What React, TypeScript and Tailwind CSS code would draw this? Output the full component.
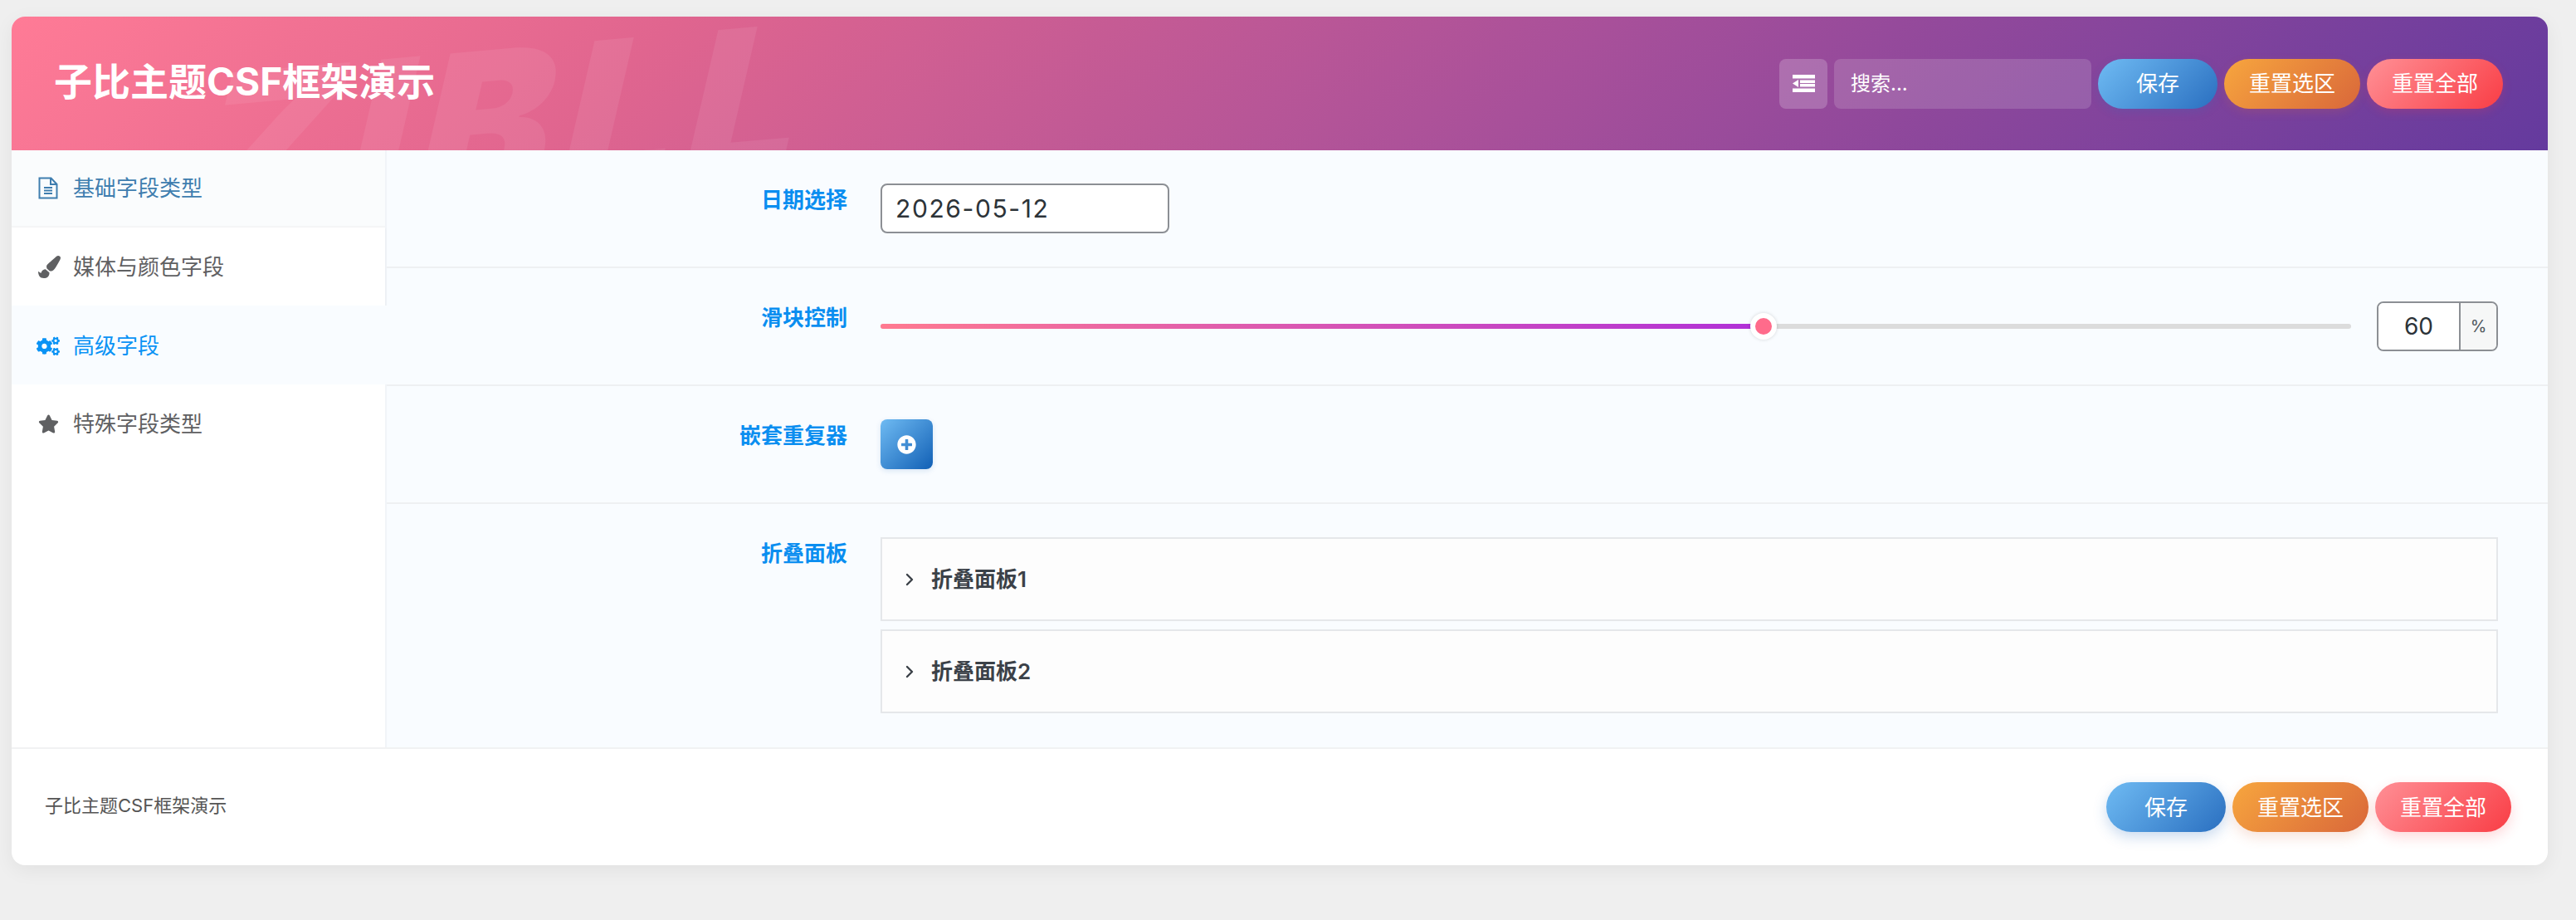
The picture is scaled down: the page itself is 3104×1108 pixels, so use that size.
import { ChevronRight } from "lucide-react";
import { FaCogs, FaPaintBrush, FaPlusCircle, FaStar } from "react-icons/fa";

// outline page with folded corner and three text lines
const PageIcon = () => (
  <svg width="24" height="27" viewBox="0 0 24 27" fill="none" stroke="currentColor" strokeWidth="2">
    <path d="M1.5 1.5h14l7 7.5v16.5h-21z" />
    <path d="M15 1.5V9h7.5" />
    <path d="M7 13h10M7 16.5h10M7 20h10" />
  </svg>
);

const IndentIcon = () => (
  <svg width="27" height="21" viewBox="0 0 27 21" fill="currentColor">
    <rect width="27" height="4.5" />
    <rect x="9" y="6.5" width="18" height="3.5" />
    <rect x="9" y="11" width="18" height="3.5" />
    <rect y="16.5" width="27" height="4.5" />
    <path d="M0 10.5L7 6v9z" />
  </svg>
);

const navItems = [
  { label: "基础字段类型", icon: <PageIcon />, box: "h-[93px] bg-[#fafcfd] text-[#3f7eaf] border-b-2 border-[#f5f6f7] w-[450px]" },
  { label: "媒体与颜色字段", icon: <FaPaintBrush size={27} />, box: "h-[94px] bg-white text-[#5f6062] w-[450px] shadow-[0_1px_3px_rgba(0,0,0,0.05)]" },
  { label: "高级字段", icon: <FaCogs size={28} className="-ml-0.5" />, box: "h-[95px] pt-[2px] text-[#0a93f5] w-[452px] bg-[#f9fcff]" },
  { label: "特殊字段类型", icon: <FaStar size={25} />, box: "h-[95px] bg-white text-[#5f6062] w-[450px]" },
];

const ActionButtons = ({ header }: { header?: boolean }) => (
  <div className="flex gap-2 text-[26px] text-white">
    <button className={`h-[60px] w-[144px] rounded-[30px] bg-[linear-gradient(135deg,#6fbbf3,#2a6fc0)] ${header ? "shadow-[0_4px_12px_rgba(42,111,192,0.2)]" : "shadow-[0_6px_16px_rgba(42,111,192,0.25)]"}`}>
      保存
    </button>
    <button className={`h-[60px] w-[164px] rounded-[30px] bg-[linear-gradient(135deg,#f7a63e,#d9673a)] ${header ? "shadow-[0_4px_12px_rgba(217,103,58,0.2)]" : "shadow-[0_6px_16px_rgba(217,103,58,0.2)]"}`}>
      重置选区
    </button>
    <button className={`h-[60px] w-[164px] rounded-[30px] bg-[linear-gradient(135deg,#ff9096,#f93d45)] ${header ? "shadow-[0_4px_12px_rgba(249,61,69,0.2)]" : "shadow-[0_6px_16px_rgba(249,61,69,0.2)]"}`}>
      重置全部
    </button>
  </div>
);

const Row = ({ label, children, last }: { label: string; children: React.ReactNode; last?: boolean }) => (
  <div className={`flex pt-10 pr-[61px] ${last ? "h-[295px]" : "h-[142px] border-b-2 border-[#eef0f2]"}`}>
    <div className="w-[555px] shrink-0 pt-[2px] text-right text-[26px] font-bold leading-[36px] text-[#0a8ef0]">{label}</div>
    <div className="ml-10 flex-1">{children}</div>
  </div>
);

const Panel = ({ title }: { title: string }) => (
  <div className="flex h-[101px] items-center border-2 border-[#e5e7ea] bg-[#fdfdfd] pl-[21px] text-[26px] font-semibold text-[#3b4148]">
    <ChevronRight size={24} strokeWidth={2.4} className="mr-[14px]" />
    {title}
  </div>
);

export default function App() {
  return (
    <div className="min-h-screen bg-[#efefef] pl-[14px] pr-[34px] pt-5 font-[Inter,'Noto_Sans_CJK_SC',sans-serif]">
      <div className="h-[1022px] overflow-hidden rounded-2xl bg-white shadow-[0_6px_24px_rgba(0,0,0,0.06)]">
        {/* Header */}
        <div className="relative flex h-[161px] items-center justify-between overflow-hidden bg-[linear-gradient(135deg,#ff7b96_0%,#e0658f_25%,#a8509a_60%,#643a9e_100%)] pl-[51px] pr-[54px]">
          <div className="absolute left-[232px] top-[6px] -rotate-[5deg] -skew-x-[18deg] text-[240px] font-black leading-none tracking-[14px] text-white/[0.07]">
            ZIBLL
          </div>
          <h1 className="relative -mt-1 text-[46px] font-bold text-white">子比主题CSF框架演示</h1>
          <div className="relative flex items-center gap-2">
            <button className="flex h-[60px] w-[58px] items-center justify-center rounded-lg bg-white/20 text-white">
              <IndentIcon />
            </button>
            <input
              placeholder="搜索..."
              className="h-[60px] w-[310px] rounded-lg bg-white/15 pl-[20px] text-[24px] text-white outline-none placeholder:text-white"
            />
            <ActionButtons header />
          </div>
        </div>

        {/* Body */}
        <div className="flex h-[721px] border-b-2 border-[#f1f2f3]">
          <div className="relative z-10 w-[450px] shrink-0 bg-white">
            {navItems.map((item) => (
              <div key={item.label} className={`flex items-center pl-[32px] text-[26px] ${item.box}`}>
                <span className="flex w-[42px] shrink-0 items-center">{item.icon}</span>
                {item.label}
              </div>
            ))}
          </div>
          <div className="flex-1 border-l-2 border-[#f1f4f8] bg-[#f9fcff]">
            <Row label="日期选择">
              <input
                defaultValue="2026-05-12"
                className="h-[60px] w-[348px] rounded-lg border-2 border-[#8c8f94] bg-white pl-4 text-[30px] tracking-[1.6px] text-[#2c3338] outline-none"
              />
            </Row>
            <Row label="滑块控制">
              <div className="flex h-[60px] items-center">
                <div className="relative h-[6px] w-[1772px] rounded-full bg-[#dcdcdc]">
                  <div className="h-full w-[1064px] rounded-full bg-[linear-gradient(90deg,#ff7a90,#b030d8)]" />
                  <div className="absolute left-[1048px] top-[-13px] h-8 w-8 rounded-full border-[6px] border-white bg-[#ff6b8b] shadow-[0_0_4px_rgba(0,0,0,0.15)]" />
                </div>
                <div className="ml-[31px] flex h-[60px] w-[146px] overflow-hidden rounded-lg border-2 border-[#8c8f94]">
                  <div className="flex w-[97px] items-center justify-center bg-white text-[28px] text-[#2c3338]">60</div>
                  <div className="flex flex-1 items-center justify-center border-l-2 border-[#8c8f94] bg-[#f6f7f7] text-[20px] text-[#50575e]">%</div>
                </div>
              </div>
            </Row>
            <Row label="嵌套重复器">
              <button className="flex h-[60px] w-[63px] items-center justify-center rounded-lg bg-[linear-gradient(135deg,#6fbbf3,#1260b5)] text-white shadow-[0_2px_6px_rgba(18,96,181,0.15)]">
                <FaPlusCircle size={23} />
              </button>
            </Row>
            <Row label="折叠面板" last>
              <div className="flex flex-col gap-[10px]">
                <Panel title="折叠面板1" />
                <Panel title="折叠面板2" />
              </div>
            </Row>
          </div>
        </div>

        {/* Footer */}
        <div className="flex h-[140px] items-center justify-between pl-10 pr-[44px]">
          <span className="-mt-1 text-[22px] text-[#555555]">子比主题CSF框架演示</span>
          <ActionButtons />
        </div>
      </div>
    </div>
  );
}
